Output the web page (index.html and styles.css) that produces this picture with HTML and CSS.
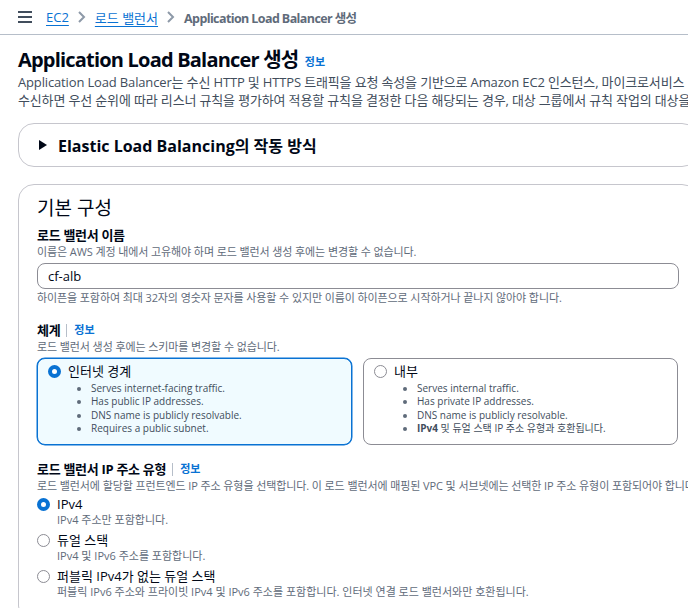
FILE: index.html
```html
<!DOCTYPE html>
<html lang="ko">
<head>
  <meta charset="UTF-8">
  <title>Application Load Balancer 생성</title>
  <link rel="stylesheet" href="styles.css">
</head>
<body>
  <!-- Top breadcrumb bar -->
  <div class="topbar">
    <svg class="menu-icon" width="16" height="14" viewBox="0 0 16 14">
      <rect x="1" y="1" width="14" height="2" fill="#414d5c"/>
      <rect x="1" y="6" width="14" height="2" fill="#414d5c"/>
      <rect x="1" y="11" width="14" height="2" fill="#414d5c"/>
    </svg>
    <a class="crumb" href="#">EC2</a>
    <svg class="chevron" width="10" height="12" viewBox="0 0 10 12"><path d="M2 1l5 5-5 5" fill="none" stroke="#8d99a8" stroke-width="2"/></svg>
    <a class="crumb" href="#">로드 밸런서</a>
    <svg class="chevron" width="10" height="12" viewBox="0 0 10 12"><path d="M2 1l5 5-5 5" fill="none" stroke="#8d99a8" stroke-width="2"/></svg>
    <span class="crumb-current">Application Load Balancer 생성</span>
  </div>

  <div class="page">
    <div class="page-header">
      <h1>Application Load Balancer 생성 <a class="info" href="#">정보</a></h1>
      <p class="page-desc">Application Load Balancer는 수신 HTTP 및 HTTPS 트래픽을 요청 속성을 기반으로 Amazon EC2 인스턴스, 마이크로서비스 및 컨테이너와 같은 대상으로 라우팅합니다.<br>수신하면 우선 순위에 따라 리스너 규칙을 평가하여 적용할 규칙을 결정한 다음 해당되는 경우, 대상 그룹에서 규칙 작업의 대상을 선택합니다.</p>
    </div>

    <div class="expander">
      <svg width="10" height="12" viewBox="0 0 10 12"><path d="M1 1l8 5-8 5z" fill="#000716"/></svg>
      <span>Elastic Load Balancing의 작동 방식</span>
    </div>

    <div class="card">
      <h2>기본 구성</h2>

      <div class="field">
        <div class="label">로드 밸런서 이름</div>
        <div class="hint">이름은 AWS 계정 내에서 고유해야 하며 로드 밸런서 생성 후에는 변경할 수 없습니다.</div>
        <div class="input">cf-alb</div>
        <div class="hint constraint">하이픈을 포함하여 최대 32자의 영숫자 문자를 사용할 수 있지만 이름이 하이픈으로 시작하거나 끝나지 않아야 합니다.</div>
      </div>

      <div class="field">
        <div class="label">체계 <span class="divider"></span><a class="info" href="#">정보</a></div>
        <div class="hint">로드 밸런서 생성 후에는 스키마를 변경할 수 없습니다.</div>
        <div class="tiles">
          <div class="tile selected">
            <div class="tile-head"><span class="radio checked"></span>인터넷 경계</div>
            <ul>
              <li>Serves internet-facing traffic.</li>
              <li>Has public IP addresses.</li>
              <li>DNS name is publicly resolvable.</li>
              <li>Requires a public subnet.</li>
            </ul>
          </div>
          <div class="tile">
            <div class="tile-head"><span class="radio"></span>내부</div>
            <ul>
              <li>Serves internal traffic.</li>
              <li>Has private IP addresses.</li>
              <li>DNS name is publicly resolvable.</li>
              <li><b>IPv4</b> 및 듀얼 스택 IP 주소 유형과 호환됩니다.</li>
            </ul>
          </div>
        </div>
      </div>

      <div class="field">
        <div class="label">로드 밸런서 IP 주소 유형 <span class="divider"></span><a class="info" href="#">정보</a></div>
        <div class="hint nowrap">로드 밸런서에 할당할 프런트엔드 IP 주소 유형을 선택합니다. 이 로드 밸런서에 매핑된 VPC 및 서브넷에는 선택한 IP 주소 유형이 포함되어야 합니다.</div>
        <div class="options">
          <div class="option">
            <span class="radio checked"></span>
            <div>
              <div class="option-label">IPv4</div>
              <div class="option-desc">IPv4 주소만 포함합니다.</div>
            </div>
          </div>
          <div class="option">
            <span class="radio"></span>
            <div>
              <div class="option-label">듀얼 스택</div>
              <div class="option-desc">IPv4 및 IPv6 주소를 포함합니다.</div>
            </div>
          </div>
          <div class="option">
            <span class="radio"></span>
            <div>
              <div class="option-label">퍼블릭 IPv4가 없는 듀얼 스택</div>
              <div class="option-desc">퍼블릭 IPv6 주소와 프라이빗 IPv4 및 IPv6 주소를 포함합니다. 인터넷 연결 로드 밸런서와만 호환됩니다.</div>
            </div>
          </div>
        </div>
      </div>
    </div>
  </div>
</body>
</html>
```

FILE: styles.css
```css
body {
  margin: 0;
  font-family: "Open Sans", "Noto Sans CJK KR", sans-serif;
  color: #000716;
  background-color: #fff;
  overflow: hidden;
}

a {
  color: #0972d3;
}

.topbar {
  display: flex;
  align-items: center;
  height: 34px;
  padding-left: 17px;
  border-bottom: 1px solid #b6bec9;
  font-size: 13px;
}

.menu-icon {
  margin-right: 13px;
}

.crumb {
  text-decoration: underline;
  text-underline-offset: 3px;
}

.chevron {
  margin: 0 8px;
}

.crumb-current {
  color: #5f6b7a;
  font-weight: bold;
  font-size: 12.5px;
  letter-spacing: -0.6px;
}

.page {
  width: 680px;
  padding-left: 18px;
}

.page-header {
  margin-top: 13px;
}

h1 {
  margin: 0;
  font-size: 20px;
  line-height: 23px;
  font-weight: bold;
  letter-spacing: -0.8px;
}

.info {
  font-size: 11px;
  font-weight: bold;
  text-decoration: none;
  margin-left: 2px;
  letter-spacing: 0;
  vertical-align: middle;
}

.page-desc {
  margin: 0;
  font-size: 13px;
  line-height: 18px;
  color: #414d5c;
  white-space: nowrap;
  letter-spacing: -0.15px;
}

.expander {
  display: flex;
  align-items: center;
  gap: 10px;
  height: 42px;
  margin-top: 14px;
  padding-left: 19px;
  border: 1px solid #c6c6cd;
  border-radius: 16px;
  font-size: 16px;
  font-weight: bold;
}

.card {
  margin-top: 17px;
  padding: 9px 18px 18px;
  border: 1px solid #c6c6cd;
  border-radius: 16px;
}

h2 {
  margin: 0;
  font-size: 19px;
  font-weight: normal;
  line-height: 28px;
}

.field {
  margin-top: 4px;
}

.field + .field {
  margin-top: 15px;
}

.label {
  display: flex;
  align-items: center;
  font-size: 13px;
  font-weight: bold;
  line-height: 18px;
  letter-spacing: -0.3px;
}

.divider {
  display: inline-block;
  width: 1px;
  height: 13px;
  background-color: #b6bec9;
  margin: 0 7px 0 6px;
}

.label .info {
  margin-left: 0;
  font-size: 11px;
}

.hint {
  font-size: 11px;
  line-height: 16px;
  color: #5f6b7a;
  letter-spacing: -0.1px;
}

.nowrap {
  white-space: nowrap;
}

.constraint {
  margin-top: 1px;
}

.input {
  margin-top: 3px;
  height: 24px;
  line-height: 24px;
  padding-left: 10px;
  border: 1px solid #8c8c94;
  border-radius: 8px;
  font-size: 13px;
}

.tiles {
  display: grid;
  grid-template-columns: 315px 315px;
  gap: 11px;
  margin-top: 3px;
}

.tile {
  padding: 3px 10px 9px;
  border: 1px solid #8c8c94;
  border-radius: 8px;
}

.tile.selected {
  border: 1px solid #0972d3;
  background-color: #f0fbff;
  box-shadow: 0 0 0 0.5px #0972d3;
}

.tile-head {
  display: flex;
  align-items: center;
  margin-bottom: 2px;
  font-size: 13px;
  line-height: 18px;
}

.radio {
  box-sizing: border-box;
  display: inline-block;
  width: 13px;
  height: 13px;
  border: 1.5px solid #8c8c94;
  border-radius: 50%;
  margin-right: 7px;
  flex-shrink: 0;
}

.radio.checked {
  border: 4px solid #0972d3;
  background-color: #fff;
}

.tile ul {
  margin: 0;
  padding-left: 43px;
  font-size: 10px;
  line-height: 13.3px;
  color: #414d5c;
}

.tile li::marker {
  color: #5f6b7a;
}

.options {
  margin-top: 1px;
}

.option {
  display: flex;
  align-items: flex-start;
  margin-bottom: 4px;
}

.option .radio {
  margin-top: 3px;
  margin-right: 7px;
}

.option-label {
  font-size: 13px;
  line-height: 18px;
}

.option-desc {
  font-size: 11px;
  line-height: 14px;
  color: #5f6b7a;
  white-space: nowrap;
}
```
